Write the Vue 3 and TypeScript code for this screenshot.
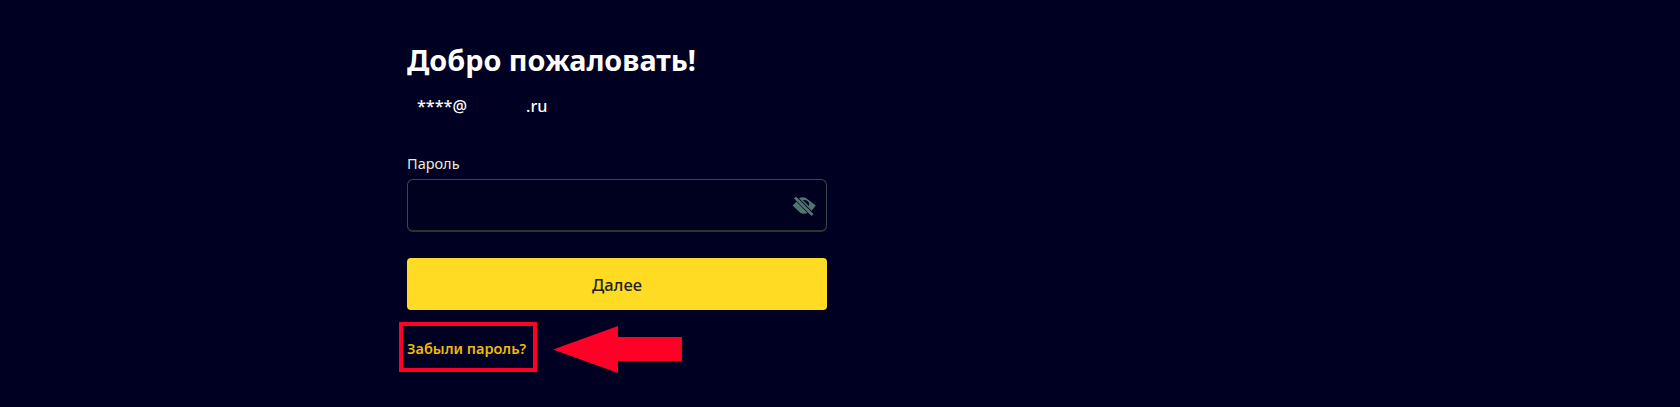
<script setup lang="ts">
const title: string = 'Добро пожаловать!'
</script>

<template>
  <main class="page">
    <section class="form">
      <h1 class="title">{{ title }}</h1>
      <div class="account"><span>****@</span><span class="domain">.ru</span></div>
      <label class="label">Пароль</label>
      <div class="field">
        <svg class="eye" viewBox="0 0 26 22" width="26" height="22" aria-hidden="true">
          <path fill="#4f7472" d="M1.500 10.500 L5.500 6.800 L16.500 18 C14 19 11.500 19 9.500 18 Z"/>
          <path fill="#4f7472" fill-rule="evenodd" d="M8 3.200 C10 1.800 13 2 15 3 L24.800 10.500 L20.500 15.800 Z M12 5.200 L17.800 11 C18.800 9.200 18 7.200 16.400 6 C15 5 13.400 4.700 12 5.200 Z"/>
          <path stroke="#4f7472" stroke-width="2.800" d="M4 2.500 L21.500 20"/>
        </svg>
      </div>
      <button class="submit" type="button">Далее</button>
      <a class="forgot">Забыли пароль?</a>
    </section>
    <div class="mark-box"></div>
    <svg class="mark-arrow" viewBox="0 0 130 48" width="130" height="48" aria-hidden="true">
      <path fill="#ff0027" d="M0 23.500 L65 0 L65 11 L129 11 L129 35 L65 35 L65 47 Z"/>
    </svg>
  </main>
</template>

<style scoped>
.page {
  position: relative;
  height: 407px;
  background: #000022;
  overflow: hidden;
  font-family: "Noto Sans", "Liberation Sans", sans-serif;
}
.form {
  width: 420px;
  margin-left: 407px;
  padding-top: 40px;
  display: flex;
  flex-direction: column;
  align-items: stretch;
}
.title {
  margin: 0;
  height: 40px;
  font-size: 28.800px;
  line-height: 40px;
  font-weight: 700;
  color: #fff;
  white-space: nowrap;
}
.account {
  margin-top: 14px;
  height: 24px;
  padding-left: 10px;
  font-size: 16.200px;
  line-height: 24px;
  font-weight: 500;
  color: #fff;
  display: flex;
}
.domain { margin-left: 59px; }
.label {
  margin-top: 34px;
  height: 22px;
  font-size: 14.500px;
  line-height: 22px;
  color: #eaecdf;
}
.field {
  margin-top: 5px;
  height: 53px;
  box-sizing: border-box;
  border: 1px solid #33494f;
  border-bottom: 2px solid #33332e;
  border-radius: 6px;
  background: #00001f;
  display: flex;
  align-items: center;
  justify-content: flex-end;
  padding-right: 9px;
}
.eye { display: block; margin-top: 1px; }
.submit {
  margin-top: 26px;
  height: 52px;
  border: 0;
  border-radius: 4px;
  background: #ffdb24;
  color: #1e2329;
  font-family: inherit;
  font-size: 16.500px;
  font-weight: 500;
}
.forgot {
  margin-top: 27px;
  align-self: flex-start;
  font-size: 14.500px;
  line-height: 22px;
  font-weight: 600;
  color: #f0b90b;
}
.mark-box {
  position: absolute;
  left: 399px;
  top: 322px;
  width: 138px;
  height: 50px;
  box-sizing: border-box;
  border: 4px solid #ff0027;
}
.mark-arrow {
  position: absolute;
  left: 553px;
  top: 326px;
}
</style>
